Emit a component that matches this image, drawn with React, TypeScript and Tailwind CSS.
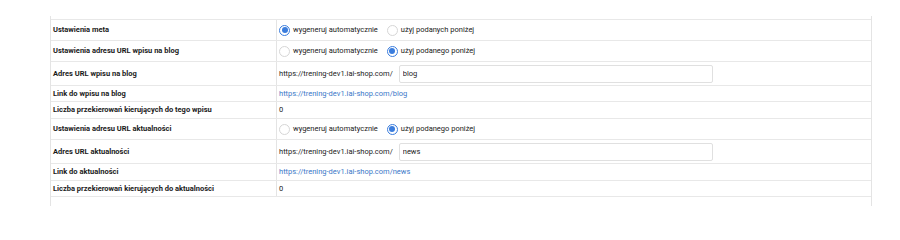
import React from 'react';

type Row =
  | { kind: 'radio'; label: string; options: string[]; selected: number; h: string }
  | { kind: 'input'; label: string; prefix: string; value: string; h: string }
  | { kind: 'link'; label: string; href: string; h: string }
  | { kind: 'text'; label: string; value: string; h: string };

const PREFIX = 'https://trening-dev1.iai-shop.com/';

const ROWS: Row[] = [
  { kind: 'radio', label: 'Ustawienia meta', options: ['wygeneruj automatycznie', 'użyj podanych poniżej'], selected: 0, h: 'h-[21px]' },
  { kind: 'radio', label: 'Ustawienia adresu URL wpisu na blog', options: ['wygeneruj automatycznie', 'użyj podanego poniżej'], selected: 1, h: 'h-[21px]' },
  { kind: 'input', label: 'Adres URL wpisu na blog', prefix: PREFIX, value: 'blog', h: 'h-[24px]' },
  { kind: 'link', label: 'Link do wpisu na blog', href: PREFIX + 'blog', h: 'h-[16px]' },
  { kind: 'text', label: 'Liczba przekierowań kierujących do tego wpisu', value: '0', h: 'h-[17px]' },
  { kind: 'radio', label: 'Ustawienia adresu URL aktualności', options: ['wygeneruj automatycznie', 'użyj podanego poniżej'], selected: 1, h: 'h-[21px]' },
  { kind: 'input', label: 'Adres URL aktualności', prefix: PREFIX, value: 'news', h: 'h-[24px]' },
  { kind: 'link', label: 'Link do aktualności', href: PREFIX + 'news', h: 'h-[17px]' },
  { kind: 'text', label: 'Liczba przekierowań kierujących do aktualności', value: '0', h: 'h-[16px]' }
];

function Radio({ checked, label }: { checked: boolean; label: string }) {
  return (
    <label className="flex items-center gap-[3px] cursor-pointer">
      {checked ? (
        <span className="flex size-[11px] items-center justify-center rounded-full border border-[#3b7ddd] bg-white">
          <span className="size-[6px] rounded-full bg-[#3b7ddd]" />
        </span>
      ) : (
        <span className="size-[11px] rounded-full border border-[#d6d6d6] bg-white" />
      )}
      <span>{label}</span>
    </label>
  );
}

function Value({ row }: { row: Row }) {
  switch (row.kind) {
    case 'radio':
      return (
        <div className="flex items-center gap-[9px] pl-[2px]">
          {row.options.map((o, i) => (
            <Radio key={o} checked={i === row.selected} label={o} />
          ))}
        </div>
      );
    case 'input':
      return (
        <div className="flex items-center gap-[6px] pl-[2px]">
          <span>{row.prefix}</span>
          <input
            readOnly
            value={row.value}
            className="h-[18px] w-[314px] rounded-[2px] border border-[#e0e0e0] bg-white px-[3px] text-[7.5px] text-[#222] outline-none"
          />
        </div>
      );
    case 'link':
      return (
        <a href="#" className="pl-[2px] text-[#3a78c8]">
          {row.href}
        </a>
      );
    default:
      return <span className="pl-[2px]">{row.value}</span>;
  }
}

export default function App() {
  return (
    <div className="h-[206px] w-[900px] overflow-hidden bg-white font-['Roboto',sans-serif] text-[7.5px] text-[#222]">
      <div className="ml-[50px] mt-[16px] w-[822px] border-x border-[#e4e4e4]">
        <div className="h-[3px]" />
        {ROWS.map((row) => (
          <div key={row.label} className={`flex border-t border-[#e8e8e8] ${row.h}`}>
            <div className="flex w-[226px] shrink-0 items-center border-r border-[#e4e4e4] pl-[2px] font-bold text-[#1a1a1a]">
              {row.label}
            </div>
            <div className="flex flex-1 items-center">
              <Value row={row} />
            </div>
          </div>
        ))}
        <div className="h-[20px] border-t border-[#e8e8e8]" />
      </div>
    </div>
  );
}
